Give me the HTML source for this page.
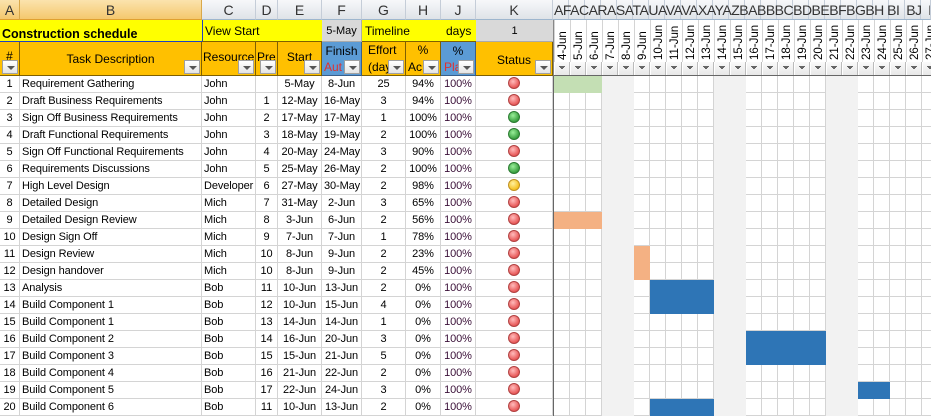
<!DOCTYPE html>
<html><head><meta charset="utf-8">
<style>
*{margin:0;padding:0;box-sizing:border-box}
body{width:931px;height:416px;overflow:hidden;background:#fff;font-family:"Liberation Sans",Arial,sans-serif;font-size:11px;color:#000;position:relative}
.a{position:absolute;overflow:hidden;white-space:nowrap}
.ch{top:0;height:20px;background:linear-gradient(#f7f8fa,#dfe3e8);border-right:1px solid #c5cdd8;border-bottom:1px solid #9eb6ce;font-size:14px;color:#333;text-align:center;line-height:20px}
.sel{background:linear-gradient(#fbe3ad,#f4c86e);border-right-color:#d9a84a;border-bottom-color:#e0a030}
.fb{position:absolute;width:16px;height:14px;border:1px solid #a0a0a0;background:linear-gradient(#fff,#e4e4e4);}
.fb:after{content:"";position:absolute;left:4px;top:5px;border-left:4px solid transparent;border-right:4px solid transparent;border-top:4px solid #555}
.or{background:#ffc000;border-right:1px solid #7f6000;border-bottom:1px solid #7f6000;text-align:center;font-size:12px}
.bl{background:#5b9bd5;border-right:1px solid #3a5f8a;border-bottom:1px solid #3a5f8a;text-align:center;font-size:12px}
table{position:absolute;left:0;top:76px;border-collapse:separate;border-spacing:0;table-layout:fixed;width:553px}
td{height:17px;border-right:1px solid #d4d4d4;border-bottom:1px solid #d4d4d4;padding:0 2px;white-space:nowrap;overflow:hidden;line-height:16px;letter-spacing:-0.1px}
td.c{text-align:center}td.r{text-align:right}
td.p{color:#3a1038;text-align:center}
.dot{display:inline-block;width:12px;height:12px;border-radius:50%;vertical-align:-2px}
.R{background:radial-gradient(circle at 40% 35%,#fbb,#e85858 70%);border:1px solid #b04040}
.G{background:radial-gradient(circle at 40% 35%,#9e9,#3aa040 70%);border:1px solid #2a7a30}
.Y{background:radial-gradient(circle at 40% 35%,#fff0a0,#f5c020 70%);border:1px solid #c09020}
.dt{position:absolute;top:0;width:16px;height:42px;border-right:1px solid #d4d4d4;writing-mode:vertical-rl;transform:rotate(180deg);font-size:11.5px;line-height:16px;text-align:left;padding-top:2px;white-space:nowrap;overflow:hidden}
.bar{position:absolute}
</style></head><body>
<div class="a ch sel" style="left:0;width:20px">A</div>
<div class="a ch sel" style="left:20px;width:182px">B</div>
<div class="a ch" style="left:202px;width:54px">C</div>
<div class="a ch" style="left:256px;width:22px">D</div>
<div class="a ch" style="left:278px;width:44px">E</div>
<div class="a ch" style="left:322px;width:40px">F</div>
<div class="a ch" style="left:362px;width:44px">G</div>
<div class="a ch" style="left:406px;width:35px">H</div>
<div class="a ch" style="left:441px;width:35px">J</div>
<div class="a ch" style="left:476px;width:77px">K</div>
<div class="a ch" style="left:553px;width:378px;text-align:left;letter-spacing:-0.5px;padding-left:1px;background:linear-gradient(90deg,transparent 15px,#c5cdd8 15px,#c5cdd8 16px,transparent 16px) 0 0/16px 20px,linear-gradient(#f7f8fa,#dfe3e8)">AFACARASATAUAVAVAXAYAZBABBBCBDBEBFBGBH BI&nbsp; BJ&nbsp; BK BLB</div>

<div class="a" style="left:0;top:20px;width:202px;height:22px;background:#ff0;border-bottom:1px solid #2040c0;font-weight:bold;font-size:12.5px;line-height:28px;padding-left:2px">Construction schedule</div>
<div class="a" style="left:202px;top:20px;width:120px;height:22px;background:#ff0;border-left:1px solid #2040c0;border-bottom:1px solid #7f6000;line-height:22px;padding-left:2px;font-size:12px">View Start</div>
<div class="a" style="left:322px;top:20px;width:40px;height:22px;background:#d9d9d9;border-right:1px solid #aaa;border-bottom:1px solid #aaa;text-align:center;line-height:22px">5-May</div>
<div class="a" style="left:362px;top:20px;width:114px;height:22px;background:#ff0;border-bottom:1px solid #7f6000;line-height:22px;padding-left:3px;font-size:12px">Timeline<span style="position:absolute;left:84px">days</span></div>
<div class="a" style="left:476px;top:20px;width:77px;height:22px;background:#d9d9d9;border-bottom:1px solid #aaa;text-align:center;line-height:22px">1</div>

<div class="a or" style="left:0;top:42px;width:20px;height:34px;line-height:28px">#<div class="fb" style="left:2px;top:18px"></div></div>
<div class="a or" style="left:20px;top:42px;width:182px;height:34px;line-height:34px">Task Description<div class="fb" style="left:164px;top:18px"></div></div>
<div class="a or" style="left:202px;top:42px;width:54px;height:34px;line-height:30px;text-align:left;padding-left:1px">Resource<div class="fb" style="left:36px;top:18px"></div></div>
<div class="a or" style="left:256px;top:42px;width:22px;height:34px;line-height:30px;text-align:left;padding-left:1px">Pre<div class="fb" style="left:4px;top:18px"></div></div>
<div class="a or" style="left:278px;top:42px;width:44px;height:34px;line-height:30px">Start<div class="fb" style="left:26px;top:18px"></div></div>
<div class="a bl" style="left:322px;top:42px;width:40px;height:34px;line-height:18px">Finish<div style="position:absolute;left:0;top:18px;width:39px;height:15px;line-height:15px;color:#e03030;text-align:left;padding-left:2px">Aut</div><div class="fb" style="left:22px;top:18px"></div></div>
<div class="a or" style="left:362px;top:42px;width:44px;height:34px;line-height:17px;text-align:left;padding-left:6px">Effort<br>(day<div class="fb" style="left:26px;top:18px"></div></div>
<div class="a or" style="left:406px;top:42px;width:35px;height:34px;line-height:17px">%<br><span style="padding-right:16px">Ac</span><div class="fb" style="left:17px;top:18px"></div></div>
<div class="a bl" style="left:441px;top:42px;width:35px;height:34px;line-height:18px">%<div style="position:absolute;left:0;top:18px;line-height:15px;color:#e03030;padding-left:3px">Pla</div><div class="fb" style="left:17px;top:18px"></div></div>
<div class="a or" style="left:476px;top:42px;width:77px;height:34px;line-height:36px">Status<div class="fb" style="left:59px;top:18px"></div></div>

<div class="a" style="left:553px;top:20px;width:378px;height:56px;border-left:1px solid #888;border-bottom:1px solid #666">
<div class="dt" style="left:0">4-Jun</div><div class="dt" style="left:16px">5-Jun</div><div class="dt" style="left:32px">6-Jun</div><div class="dt" style="left:48px">7-Jun</div><div class="dt" style="left:64px">8-Jun</div><div class="dt" style="left:80px">9-Jun</div><div class="dt" style="left:96px">10-Jun</div><div class="dt" style="left:112px">11-Jun</div><div class="dt" style="left:128px">12-Jun</div><div class="dt" style="left:144px">13-Jun</div><div class="dt" style="left:160px">14-Jun</div><div class="dt" style="left:176px">15-Jun</div><div class="dt" style="left:192px">16-Jun</div><div class="dt" style="left:208px">17-Jun</div><div class="dt" style="left:224px">18-Jun</div><div class="dt" style="left:240px">19-Jun</div><div class="dt" style="left:256px">20-Jun</div><div class="dt" style="left:272px">21-Jun</div><div class="dt" style="left:288px">22-Jun</div><div class="dt" style="left:304px">23-Jun</div><div class="dt" style="left:320px">24-Jun</div><div class="dt" style="left:336px">25-Jun</div><div class="dt" style="left:352px">26-Jun</div><div class="dt" style="left:368px">27-Jun</div>
<div style="position:absolute;left:0;top:42px;width:378px;height:14px;background:linear-gradient(90deg,#fff 0,#fff 1px,transparent 1px,transparent 15px,#bbb 15px) 0 0/16px 14px,linear-gradient(#fafafa,#e6e6e6)"></div>
<div style="position:absolute;left:0;top:46px;width:378px;height:3px;background:linear-gradient(90deg,transparent 5px,#666 5px,#666 11px,transparent 11px) 0 0/16px 1px repeat-x,linear-gradient(90deg,transparent 6px,#666 6px,#666 10px,transparent 10px) 0 1px/16px 1px repeat-x,linear-gradient(90deg,transparent 7px,#666 7px,#666 9px,transparent 9px) 0 2px/16px 1px repeat-x;background-repeat:repeat-x"></div>
</div>

<div class="a" style="left:553px;top:76px;width:378px;height:340px;border-left:1px solid #666">
<div class="bar" style="left:0;top:0;width:378px;height:340px;background:linear-gradient(90deg,transparent 15px,#d4d4d4 15px) 0 0/16px 17px,linear-gradient(transparent 16px,#d4d4d4 16px) 0 0/16px 17px"></div>
<div class="bar" style="left:48px;top:0;width:32px;height:340px;background:#f2f2f2"></div>
<div class="bar" style="left:160px;top:0;width:32px;height:340px;background:#f2f2f2"></div>
<div class="bar" style="left:272px;top:0;width:32px;height:340px;background:#f2f2f2"></div>
<div class="bar" style="left:0;top:0;width:48px;height:17px;background:#c4dfb4"></div>
<div class="bar" style="left:0;top:136px;width:48px;height:17px;background:#f4b183"></div>
<div class="bar" style="left:80px;top:170px;width:16px;height:34px;background:#f4b183"></div>
<div class="bar" style="left:96px;top:204px;width:64px;height:34px;background:#2e75b6"></div>
<div class="bar" style="left:192px;top:255px;width:80px;height:34px;background:#2e75b6"></div>
<div class="bar" style="left:304px;top:306px;width:32px;height:17px;background:#2e75b6"></div>
<div class="bar" style="left:96px;top:323px;width:64px;height:17px;background:#2e75b6"></div>
</div>

<table>
<colgroup><col style="width:20px"><col style="width:182px"><col style="width:54px"><col style="width:22px"><col style="width:44px"><col style="width:40px"><col style="width:44px"><col style="width:35px"><col style="width:35px"><col style="width:77px"></colgroup>
<tr><td class="c">1</td><td>Requirement Gathering</td><td>John</td><td class="c"></td><td class="c">5-May</td><td class="c">8-Jun</td><td class="c">25</td><td class="c">94%</td><td class="p">100%</td><td class="c"><span class="dot R"></span></td></tr>
<tr><td class="c">2</td><td>Draft Business Requirements</td><td>John</td><td class="c">1</td><td class="c">12-May</td><td class="c">16-May</td><td class="c">3</td><td class="c">94%</td><td class="p">100%</td><td class="c"><span class="dot R"></span></td></tr>
<tr><td class="c">3</td><td>Sign Off Business Requirements</td><td>John</td><td class="c">2</td><td class="c">17-May</td><td class="c">17-May</td><td class="c">1</td><td class="c">100%</td><td class="p">100%</td><td class="c"><span class="dot G"></span></td></tr>
<tr><td class="c">4</td><td>Draft Functional Requirements</td><td>John</td><td class="c">3</td><td class="c">18-May</td><td class="c">19-May</td><td class="c">2</td><td class="c">100%</td><td class="p">100%</td><td class="c"><span class="dot G"></span></td></tr>
<tr><td class="c">5</td><td>Sign Off Functional Requirements</td><td>John</td><td class="c">4</td><td class="c">20-May</td><td class="c">24-May</td><td class="c">3</td><td class="c">90%</td><td class="p">100%</td><td class="c"><span class="dot R"></span></td></tr>
<tr><td class="c">6</td><td>Requirements Discussions</td><td>John</td><td class="c">5</td><td class="c">25-May</td><td class="c">26-May</td><td class="c">2</td><td class="c">100%</td><td class="p">100%</td><td class="c"><span class="dot G"></span></td></tr>
<tr><td class="c">7</td><td>High Level Design</td><td>Developer</td><td class="c">6</td><td class="c">27-May</td><td class="c">30-May</td><td class="c">2</td><td class="c">98%</td><td class="p">100%</td><td class="c"><span class="dot Y"></span></td></tr>
<tr><td class="c">8</td><td>Detailed Design</td><td>Mich</td><td class="c">7</td><td class="c">31-May</td><td class="c">2-Jun</td><td class="c">3</td><td class="c">65%</td><td class="p">100%</td><td class="c"><span class="dot R"></span></td></tr>
<tr><td class="c">9</td><td>Detailed Design Review</td><td>Mich</td><td class="c">8</td><td class="c">3-Jun</td><td class="c">6-Jun</td><td class="c">2</td><td class="c">56%</td><td class="p">100%</td><td class="c"><span class="dot R"></span></td></tr>
<tr><td class="c">10</td><td>Design Sign Off</td><td>Mich</td><td class="c">9</td><td class="c">7-Jun</td><td class="c">7-Jun</td><td class="c">1</td><td class="c">78%</td><td class="p">100%</td><td class="c"><span class="dot R"></span></td></tr>
<tr><td class="c">11</td><td>Design Review</td><td>Mich</td><td class="c">10</td><td class="c">8-Jun</td><td class="c">9-Jun</td><td class="c">2</td><td class="c">23%</td><td class="p">100%</td><td class="c"><span class="dot R"></span></td></tr>
<tr><td class="c">12</td><td>Design handover</td><td>Mich</td><td class="c">10</td><td class="c">8-Jun</td><td class="c">9-Jun</td><td class="c">2</td><td class="c">45%</td><td class="p">100%</td><td class="c"><span class="dot R"></span></td></tr>
<tr><td class="c">13</td><td>Analysis</td><td>Bob</td><td class="c">11</td><td class="c">10-Jun</td><td class="c">13-Jun</td><td class="c">2</td><td class="c">0%</td><td class="p">100%</td><td class="c"><span class="dot R"></span></td></tr>
<tr><td class="c">14</td><td>Build Component 1</td><td>Bob</td><td class="c">12</td><td class="c">10-Jun</td><td class="c">15-Jun</td><td class="c">4</td><td class="c">0%</td><td class="p">100%</td><td class="c"><span class="dot R"></span></td></tr>
<tr><td class="c">15</td><td>Build Component 1</td><td>Bob</td><td class="c">13</td><td class="c">14-Jun</td><td class="c">14-Jun</td><td class="c">1</td><td class="c">0%</td><td class="p">100%</td><td class="c"><span class="dot R"></span></td></tr>
<tr><td class="c">16</td><td>Build Component 2</td><td>Bob</td><td class="c">14</td><td class="c">16-Jun</td><td class="c">20-Jun</td><td class="c">3</td><td class="c">0%</td><td class="p">100%</td><td class="c"><span class="dot R"></span></td></tr>
<tr><td class="c">17</td><td>Build Component 3</td><td>Bob</td><td class="c">15</td><td class="c">15-Jun</td><td class="c">21-Jun</td><td class="c">5</td><td class="c">0%</td><td class="p">100%</td><td class="c"><span class="dot R"></span></td></tr>
<tr><td class="c">18</td><td>Build Component 4</td><td>Bob</td><td class="c">16</td><td class="c">21-Jun</td><td class="c">22-Jun</td><td class="c">2</td><td class="c">0%</td><td class="p">100%</td><td class="c"><span class="dot R"></span></td></tr>
<tr><td class="c">19</td><td>Build Component 5</td><td>Bob</td><td class="c">17</td><td class="c">22-Jun</td><td class="c">24-Jun</td><td class="c">3</td><td class="c">0%</td><td class="p">100%</td><td class="c"><span class="dot R"></span></td></tr>
<tr><td class="c">20</td><td>Build Component 6</td><td>Bob</td><td class="c">11</td><td class="c">10-Jun</td><td class="c">13-Jun</td><td class="c">2</td><td class="c">0%</td><td class="p">100%</td><td class="c"><span class="dot R"></span></td></tr>
</table>
</body></html>
